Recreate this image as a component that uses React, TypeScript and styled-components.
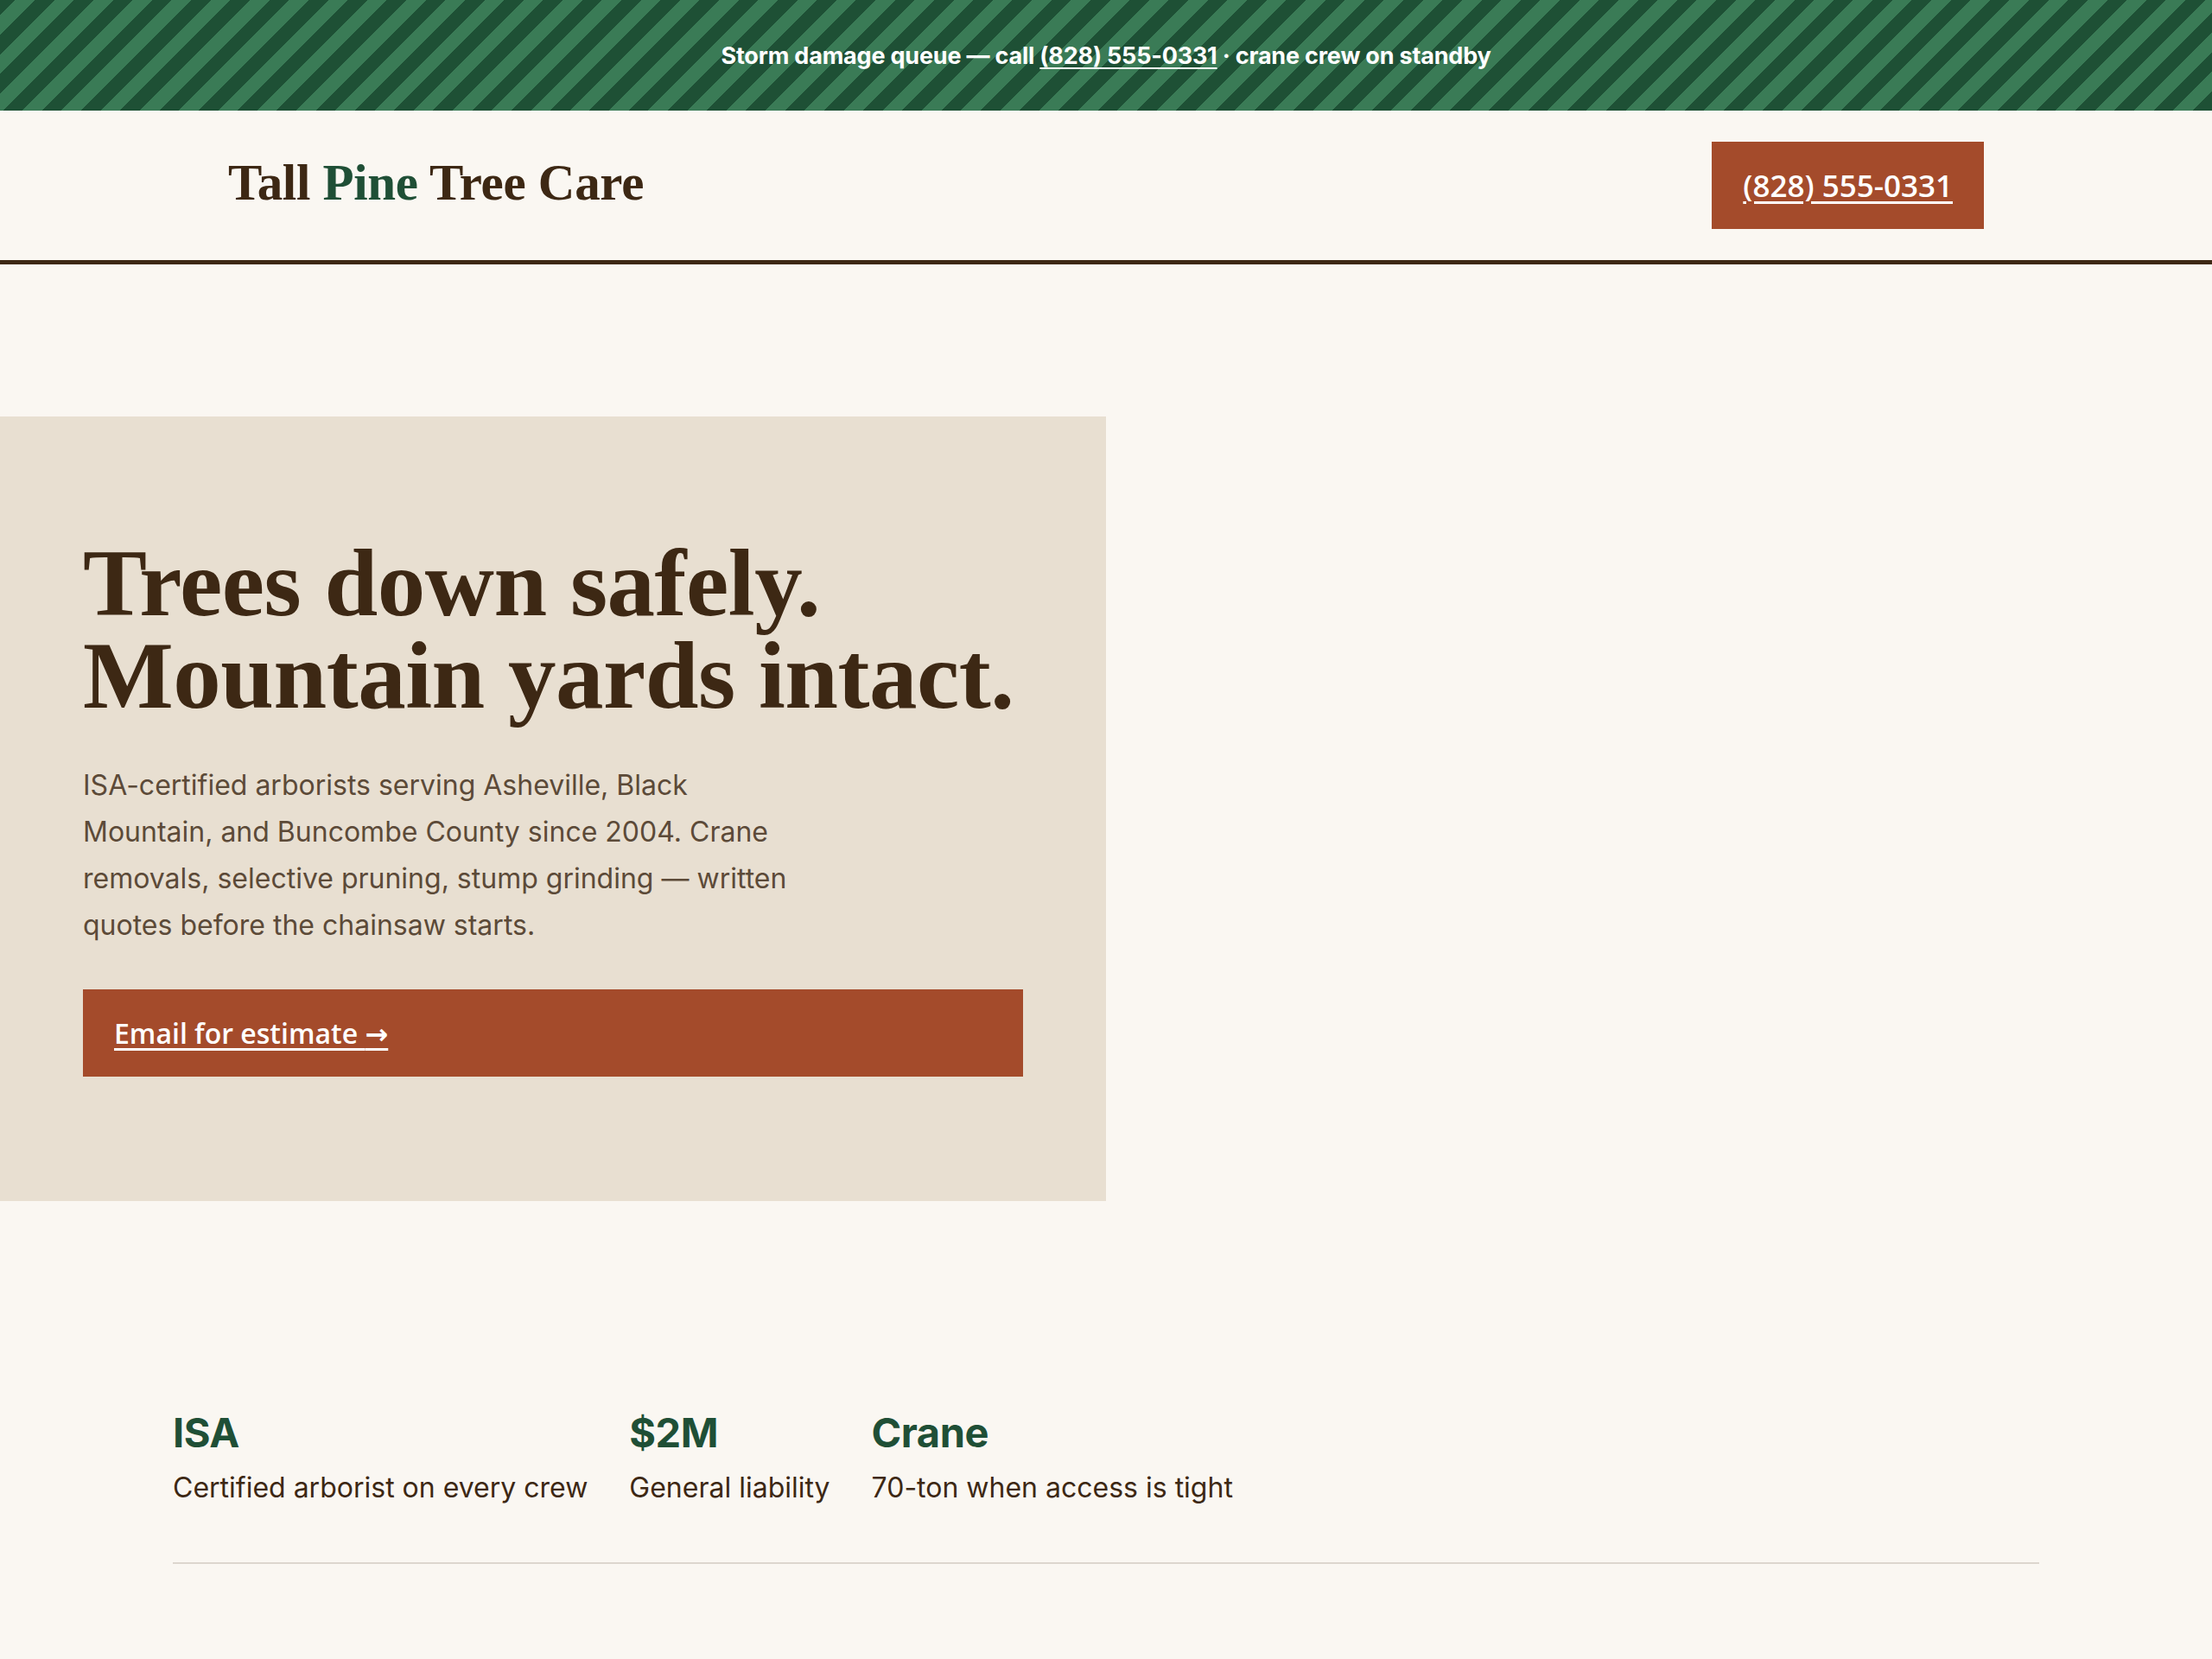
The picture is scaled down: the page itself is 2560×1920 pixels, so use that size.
import React from 'react'
import styled, { createGlobalStyle } from 'styled-components'

const ink = '#3d2814'
const pine = '#1f4f36'
const rust = '#a44b2b'
const paper = '#faf7f2'
const sand = '#e8dfd1'

const sans = `Inter, "Noto Sans", "Liberation Sans", sans-serif`
const serif = `"Liberation Serif", "DejaVu Serif", serif`
const buttonFont = `"Open Sans", "Noto Sans", sans-serif`

const GlobalStyle = createGlobalStyle`
  html, body {
    margin: 0;
    padding: 0;
    background: ${paper};
    color: ${ink};
    font-family: ${sans};
  }
  * { box-sizing: border-box; }
`

const Page = styled.div`
  min-height: 1920px;
  background: ${paper};
`

// striped alert strip at the very top
const AlertBar = styled.div`
  height: 128px;
  display: flex;
  align-items: center;
  justify-content: center;
  background: repeating-linear-gradient(
    -45deg,
    #1e5035 0 16px,
    #3a7b56 16px 32px
  );
  color: #fff;
  font-family: ${sans};
  font-weight: 700;
  font-size: 27px;
  letter-spacing: -0.2px;
`

const AlertText = styled.p`
  margin: 0;
`

const AlertLink = styled.a`
  color: #fff;
  text-decoration: underline;
  text-decoration-thickness: 2px;
  text-underline-offset: 4px;
`

const Container = styled.div`
  max-width: 2160px;
  margin: 0 auto;
`

const HeaderWrap = styled.header`
  border-bottom: 5px solid ${ink};
`

const HeaderRow = styled(Container)`
  display: flex;
  align-items: center;
  justify-content: space-between;
  padding: 36px 64px;
`

const Logo = styled.div`
  font-family: ${serif};
  font-weight: 700;
  font-size: 59px;
  color: ${ink};
  letter-spacing: -0.3px;
  margin-top: -6px;
`

const LogoAccent = styled.span`
  color: ${pine};
`

const Button = styled.a<{ $size: number; $block?: boolean }>`
  display: ${(p) => (p.$block ? 'flex' : 'inline-flex')};
  align-items: center;
  height: 101px;
  padding: 0 36px;
  background: ${rust};
  color: #fff;
  font-family: ${buttonFont};
  font-weight: 600;
  font-size: ${(p) => p.$size}px;
  text-decoration: underline;
  text-decoration-thickness: 3px;
  text-underline-offset: 5px;
`

const ButtonLabel = styled.span`
  white-space: nowrap;
`

const Arrow = styled.span`
  font-family: "DejaVu Sans", sans-serif;
  font-weight: 700;
`

const Hero = styled.section`
  display: grid;
  grid-template-columns: 1fr 1fr;
  margin-top: 176px;
`

const Panel = styled.div`
  background: ${sand};
  padding: 139px 96px 144px;
`

const Headline = styled.h1`
  margin: 0;
  font-family: ${serif};
  font-weight: 700;
  font-size: 111px;
  line-height: 107px;
  color: ${ink};
  letter-spacing: -0.5px;
`

const Lede = styled.p`
  margin: 47px 0 47px;
  max-width: 840px;
  font-family: ${sans};
  font-size: 32px;
  line-height: 54px;
  color: #5c4a38;
`

const Stats = styled(Container)`
  display: flex;
  gap: 48px;
  margin-top: 239px;
  padding-bottom: 64px;
  border-bottom: 2px solid #dcd6ce;
`

const Stat = styled.div`
  display: flex;
  flex-direction: column;
  gap: 12px;
`

const StatValue = styled.div`
  font-family: ${sans};
  font-weight: 700;
  font-size: 47px;
  line-height: 58px;
  color: ${pine};
  letter-spacing: -0.5px;
`

const StatLabel = styled.div`
  font-family: ${sans};
  font-size: 32px;
  line-height: 45px;
  color: ${ink};
`

const stats = [
  { value: 'ISA', label: 'Certified arborist on every crew' },
  { value: '$2M', label: 'General liability' },
  { value: 'Crane', label: '70-ton when access is tight' },
]

export default function App() {
  return (
    <Page>
      <GlobalStyle />
      <AlertBar>
        <AlertText>
          Storm damage queue — call <AlertLink href="#">(828) 555-0331</AlertLink> · crane crew on standby
        </AlertText>
      </AlertBar>
      <HeaderWrap>
        <HeaderRow>
          <Logo>
            Tall <LogoAccent>Pine</LogoAccent> Tree Care
          </Logo>
          <Button href="#" $size={35}>
            <ButtonLabel>(828) 555-0331</ButtonLabel>
          </Button>
        </HeaderRow>
      </HeaderWrap>
      <Hero>
        <Panel>
          <Headline>
            Trees down safely.
            <br />
            Mountain yards intact.
          </Headline>
          <Lede>
            ISA-certified arborists serving Asheville, Black Mountain, and Buncombe County since 2004. Crane
            removals, selective pruning, stump grinding — written quotes before the chainsaw starts.
          </Lede>
          <Button href="#" $size={32} $block>
            <ButtonLabel>
              Email for estimate <Arrow>→</Arrow>
            </ButtonLabel>
          </Button>
        </Panel>
        <div />
      </Hero>
      <Stats>
        {stats.map((s) => (
          <Stat key={s.value}>
            <StatValue>{s.value}</StatValue>
            <StatLabel>{s.label}</StatLabel>
          </Stat>
        ))}
      </Stats>
    </Page>
  )
}
